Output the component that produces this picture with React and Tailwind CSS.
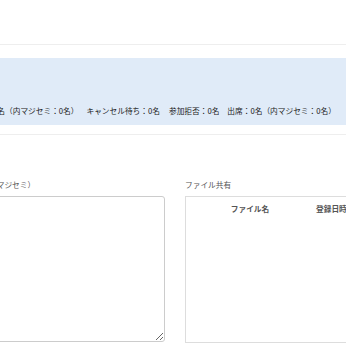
export default function App() {
  const font = { fontFamily: '"Noto Sans CJK JP", "Noto Sans", sans-serif' };
  return (
    <div className="w-[346px] h-[346px] overflow-hidden bg-white [text-spacing-trim:space-all]" style={font}>
      <div className="h-[44px]" />
      <div className="border-t border-[#eeeeee]" />
      <div className="mt-[13px] h-[67px] bg-[#e0ebf8] flex items-end pb-[9px]">
        <div className="flex whitespace-nowrap text-[7.7px] leading-[10px] text-[#222] ml-[-30px]">
          <span>申込：0名（内マジセミ：0名）</span>
          <span className="ml-[8px]">キャンセル待ち：0名</span>
          <span className="ml-[9px]">参加拒否：0名</span>
          <span className="ml-[8px]">出席：0名（内マジセミ：0名）</span>
        </div>
      </div>
      <div className="mt-[9px] border-t border-[#eeeeee]" />
      <div className="mt-[45px] flex gap-[21px]">
        <div className="w-[164px] shrink-0 flex flex-col">
          <div className="text-[7.7px] leading-[10px] text-[#555] whitespace-nowrap ml-[-11px]">（マジセミ）</div>
          <textarea className="mt-[6px] ml-[-10px] w-[175px] h-[146px] border border-[#cccccc] rounded-[3px] bg-white outline-none" />
        </div>
        <div className="w-[200px] shrink-0 flex flex-col">
          <div className="text-[7.7px] leading-[10px] text-[#555] whitespace-nowrap">ファイル共有</div>
          <div className="mt-[6px] h-[147px] border border-[#dddddd] bg-white">
            <div className="flex pt-[7px] text-[7.7px] leading-[10px] font-bold text-[#555] whitespace-nowrap">
              <div className="w-[128px] text-center">ファイル名</div>
              <div className="pl-[2px]">登録日時</div>
            </div>
          </div>
        </div>
      </div>
    </div>
  );
}
